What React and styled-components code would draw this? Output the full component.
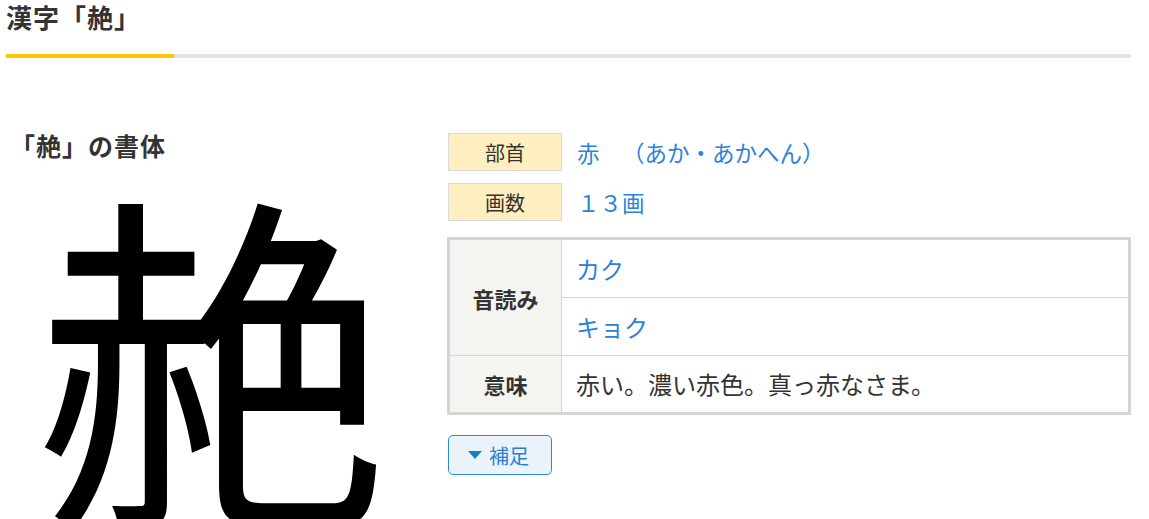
import React from "react";
import styled, { createGlobalStyle } from "styled-components";

const Global = createGlobalStyle`
  html, body { margin: 0; padding: 0; background: #fff; }
  body {
    font-family: "Noto Sans CJK JP", "Noto Sans", sans-serif;
    color: #333;
    text-spacing-trim: space-all;
  }
`;

const Page = styled.div`
  width: 1125px;
  padding-left: 6px;
`;

const Title = styled.h2`
  margin: 0;
  padding-top: 1px;
  font-size: 26px;
  letter-spacing: 1px;
  line-height: 32px;
  font-weight: 700;
  color: #333;
`;

const Bar = styled.div`
  display: flex;
  height: 4px;
  margin-top: 21px;
`;

const BarPart = styled.div`
  height: 100%;
  background: ${(p) => (p.$accent ? "#ffc700" : "#e6e6e6")};
  ${(p) => (p.$accent ? "width: 168px;" : "flex: 1;")}
`;

const Main = styled.div`
  display: flex;
  margin-top: 75px;
  gap: 30px;
`;

const LeftCol = styled.div`
  width: 412px;
  flex-shrink: 0;
`;

const SubTitle = styled.h3`
  margin: 0;
  padding-left: 4px;
  font-size: 25px;
  letter-spacing: 1px;
  line-height: 24px;
  font-weight: 700;
  color: #333;
`;

const BigGlyph = styled.div`
  margin-top: 14px;
  text-align: center;
  font-size: 352px;
  line-height: 1;
  color: #000;
  font-weight: 400;
`;

const RightCol = styled.div`
  flex: 1;
  display: flex;
  flex-direction: column;
`;

const InfoRow = styled.div`
  display: flex;
  align-items: center;
  margin-bottom: 12px;
`;

const Label = styled.div`
  width: 112px;
  height: 36px;
  border: 1px solid #d9d9d9;
  background: #ffeebf;
  display: flex;
  align-items: center;
  justify-content: center;
  font-size: 20px;
  color: #333;
`;

const Value = styled.span`
  margin-left: 15px;
  font-size: 22.5px;
  color: #2b82d9;
`;

const Table = styled.table`
  margin-top: 4px;
  margin-left: -1px;
  width: 684px;
  border-collapse: collapse;
  border: 3px solid #d4d4d4;
`;

const Th = styled.th`
  width: 111px;
  background: #f4f4f0;
  border: 1px solid #d4d4d4;
  font-size: 22px;
  font-weight: 700;
  color: #333;
  padding: 0;
`;

const Td = styled.td`
  height: ${(p) => (p.$reading ? "57px" : "56px")};
  border: 1px solid #d4d4d4;
  padding: 0 0 0 14px;
  font-size: 24px;
  color: ${(p) => (p.$reading ? "#2b82d9" : "#333")};
  line-height: 1;
`;

const Button = styled.button`
  margin-top: 20px;
  width: 104px;
  height: 40px;
  display: flex;
  align-items: center;
  gap: 7px;
  padding: 0 0 0 19px;
  border: 1px solid #2b8ad6;
  border-radius: 5px;
  background: #eaf3fa;
  color: #2b7fd0;
  font-family: inherit;
  font-size: 20px;
  cursor: pointer;
`;

const Caret = styled.span`
  width: 0;
  height: 0;
  border-left: 7px solid transparent;
  border-right: 7px solid transparent;
  border-top: 8px solid #1b7cc8;
`;

export default function App() {
  return (
    <>
      <Global />
      <Page>
        <Title>漢字「赩」</Title>
        <Bar>
          <BarPart $accent />
          <BarPart />
        </Bar>
        <Main>
          <LeftCol>
            <SubTitle>「赩」の書体</SubTitle>
            <BigGlyph>赩</BigGlyph>
          </LeftCol>
          <RightCol>
            <InfoRow>
              <Label>部首</Label>
              <Value>赤　（あか・あかへん）</Value>
            </InfoRow>
            <InfoRow>
              <Label>画数</Label>
              <Value>１３画</Value>
            </InfoRow>
            <Table>
              <tbody>
                <tr>
                  <Th rowSpan={2}>音読み</Th>
                  <Td $reading>カク</Td>
                </tr>
                <tr>
                  <Td $reading>キョク</Td>
                </tr>
                <tr>
                  <Th>意味</Th>
                  <Td>赤い。濃い赤色。真っ赤なさま。</Td>
                </tr>
              </tbody>
            </Table>
            <div>
              <Button>
                <Caret />
                補足
              </Button>
            </div>
          </RightCol>
        </Main>
      </Page>
    </>
  );
}
